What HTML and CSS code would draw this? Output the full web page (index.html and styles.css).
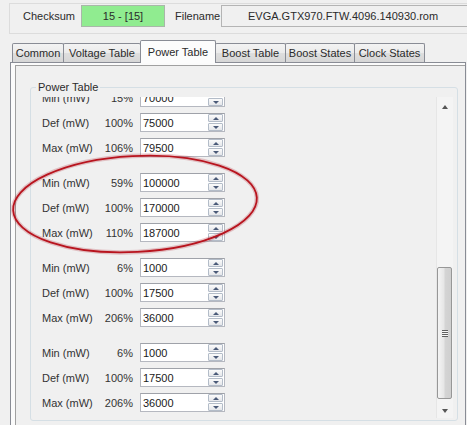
FILE: index.html
```html
<!DOCTYPE html>
<html>
<head>
<meta charset="utf-8">
<link rel="stylesheet" href="styles.css">
</head>
<body>
<div class="top">
  <div class="toprow">
    <span class="lbl lbl-chk">Checksum</span>
    <div class="chk">15 - [15]</div>
    <span class="lbl lbl-fn">Filename</span>
    <div class="fname">EVGA.GTX970.FTW.4096.140930.rom</div>
  </div>
</div>
<div class="tabs">
  <div class="tab w1">Common</div>
  <div class="tab w2">Voltage Table</div>
  <div class="tab sel w3">Power Table</div>
  <div class="tab w4">Boost Table</div>
  <div class="tab w5">Boost States</div>
  <div class="tab w6">Clock States</div>
</div>
<div class="tabpanel">
  <div class="page">
    <div class="group">
      <span class="legend">Power Table</span>
      <div class="scroller">
        <div class="viewport">
          <div class="content">
            <div class="set">
              <div class="row"><span class="name">Min (mW)</span><span class="pct">15%</span><div class="num"><span class="val">70000</span><div class="spin"><i class="up"></i><i class="dn"></i></div></div></div>
              <div class="row"><span class="name">Def (mW)</span><span class="pct">100%</span><div class="num"><span class="val">75000</span><div class="spin"><i class="up"></i><i class="dn"></i></div></div></div>
              <div class="row"><span class="name">Max (mW)</span><span class="pct">106%</span><div class="num"><span class="val">79500</span><div class="spin"><i class="up"></i><i class="dn"></i></div></div></div>
            </div>
            <div class="set">
              <div class="row"><span class="name">Min (mW)</span><span class="pct">59%</span><div class="num"><span class="val">100000</span><div class="spin"><i class="up"></i><i class="dn"></i></div></div></div>
              <div class="row"><span class="name">Def (mW)</span><span class="pct">100%</span><div class="num"><span class="val">170000</span><div class="spin"><i class="up"></i><i class="dn"></i></div></div></div>
              <div class="row"><span class="name">Max (mW)</span><span class="pct">110%</span><div class="num"><span class="val">187000</span><div class="spin"><i class="up"></i><i class="dn"></i></div></div></div>
            </div>
            <div class="set">
              <div class="row"><span class="name">Min (mW)</span><span class="pct">6%</span><div class="num"><span class="val">1000</span><div class="spin"><i class="up"></i><i class="dn"></i></div></div></div>
              <div class="row"><span class="name">Def (mW)</span><span class="pct">100%</span><div class="num"><span class="val">17500</span><div class="spin"><i class="up"></i><i class="dn"></i></div></div></div>
              <div class="row"><span class="name">Max (mW)</span><span class="pct">206%</span><div class="num"><span class="val">36000</span><div class="spin"><i class="up"></i><i class="dn"></i></div></div></div>
            </div>
            <div class="set">
              <div class="row"><span class="name">Min (mW)</span><span class="pct">6%</span><div class="num"><span class="val">1000</span><div class="spin"><i class="up"></i><i class="dn"></i></div></div></div>
              <div class="row"><span class="name">Def (mW)</span><span class="pct">100%</span><div class="num"><span class="val">17500</span><div class="spin"><i class="up"></i><i class="dn"></i></div></div></div>
              <div class="row"><span class="name">Max (mW)</span><span class="pct">206%</span><div class="num"><span class="val">36000</span><div class="spin"><i class="up"></i><i class="dn"></i></div></div></div>
            </div>
          </div>
        </div>
        <div class="vscroll">
          <div class="sbtn"><i class="arr-up"></i></div>
          <div class="track"><div class="thumb"><div class="grip"></div></div></div>
          <div class="sbtn"><i class="arr-dn"></i></div>
        </div>
      </div>
    </div>
  </div>
</div>
<svg class="mark" width="467" height="425" viewBox="0 0 467 425">
  <ellipse cx="135" cy="204" rx="122" ry="48" transform="rotate(-3 135 204)" fill="none" stroke="rgba(170,20,30,0.22)" stroke-width="4.5"/>
  <ellipse cx="135" cy="204" rx="122" ry="48" transform="rotate(-3 135 204)" fill="none" stroke="#b8141e" stroke-width="1.8"/>
</svg>
</body>
</html>
```
FILE: styles.css
```css
html, body {
  margin: 0;
  padding: 0;
}
body {
  width: 467px;
  height: 425px;
  overflow: hidden;
  position: relative;
  background: #f0f0f0;
  font-family: "Liberation Sans", Arial, sans-serif;
  font-size: 11px;
  color: #2b2b2b;
}
.top {
  margin: 3px 0 0 9px;
  height: 31px;
  box-sizing: border-box;
  border: 1px solid #dcdcdc;
  border-right: none;
  padding: 1px 0 0 13px;
  overflow: hidden;
}
.toprow {
  display: flex;
  align-items: center;
  height: 22px;
}
.lbl { flex: none; }
.lbl-chk { width: 58px; }
.chk {
  flex: none;
  width: 84px;
  height: 22px;
  box-sizing: border-box;
  border: 1px solid #a9b7a9;
  background: #90ec90;
  display: flex;
  align-items: center;
  justify-content: center;
}
.lbl-fn { margin-left: 10px; width: 46px; }
.fname {
  width: 270px;
  flex: none;
  height: 22px;
  box-sizing: border-box;
  border: 1px solid #b4b4b4;
  border-right: none;
  display: flex;
  align-items: center;
  padding-left: 26px;
}
.tabs {
  margin: 6px 0 0 12px;
  height: 22px;
  display: flex;
  align-items: flex-end;
  position: relative;
  z-index: 2;
}
.tab {
  flex: none;
  height: 19px;
  box-sizing: border-box;
  border: 1px solid #898c95;
  border-bottom: none;
  margin-right: -1px;
  background: linear-gradient(#f3f3f3, #ebebeb 50%, #dedede 51%, #d6d6d6);
  display: flex;
  align-items: center;
  justify-content: center;
  border-radius: 2px 2px 0 0;
}
.tab.sel {
  height: 23px;
  margin-bottom: -1px;
  background: #fcfcfc;
  position: relative;
  z-index: 3;
  padding-bottom: 1px;
}
.w1 { width: 52px; }
.w2 { width: 78px; }
.w3 { width: 76px; }
.w4 { width: 71px; }
.w5 { width: 70px; }
.w6 { width: 71px; }
.tabpanel {
  margin-left: 10px;
  width: 456px;
  height: 363px;
  box-sizing: border-box;
  border: 1px solid #898c95;
  border-bottom: none;
  background: #fbfbfb;
  padding: 2px 0 0 4px;
}
.page {
  height: 360px;
  border-left: 1px solid #a0a0a0;
  border-top: 1px solid #a0a0a0;
  background: #f0f0f0;
  padding: 21px 0 0 14px;
  box-sizing: border-box;
}
.group {
  position: relative;
  width: 428px;
  height: 334px;
  box-sizing: border-box;
  border: 1px solid #d5dfe5;
  border-radius: 3px;
  padding: 9px 0 0 1px;
}
.legend {
  position: absolute;
  top: -7px;
  left: 5px;
  padding: 0 2px;
  line-height: 13px;
  background: #f0f0f0;
}
.scroller {
  display: flex;
  width: 421px;
  height: 321px;
}
.viewport {
  flex: 1;
  overflow: hidden;
}
.content {
  margin-top: -12px;
  padding-left: 10px;
}
.set { margin-bottom: 10px; }
.row {
  display: flex;
  align-items: center;
  height: 25px;
}
.name { width: 60px; color: #333; }
.pct { width: 31px; text-align: right; color: #333; }
.num {
  margin-left: 7px;
  width: 85px;
  height: 19px;
  box-sizing: border-box;
  border: 1px solid #b5b8c0;
  border-top-color: #9fa2a9;
  background: #fff;
  display: flex;
  align-items: center;
}
.val {
  flex: 1;
  padding-left: 2px;
  color: #1a1a1a;
}
.spin {
  width: 15px;
  height: 17px;
  margin-right: 1px;
  display: flex;
  flex-direction: column;
  justify-content: space-between;
}
.spin i {
  display: block;
  height: 8px;
  box-sizing: border-box;
  border: 1px solid #b3bcc8;
  border-radius: 1px;
  background: linear-gradient(#fbfbfb, #e4e6ea);
  position: relative;
}
.spin i::after {
  content: "";
  position: absolute;
  left: 3.5px;
  top: 1.5px;
  width: 0;
  height: 0;
  border-left: 3px solid transparent;
  border-right: 3px solid transparent;
}
.spin i.up::after { border-bottom: 3px solid #4a5a78; }
.spin i.dn::after { border-top: 3px solid #4a5a78; }
.vscroll {
  width: 17px;
  display: flex;
  flex-direction: column;
  background: #f4f4f4;
  border-left: 1px solid #e6e6e6;
  box-sizing: border-box;
}
.sbtn {
  height: 17px;
  display: flex;
  align-items: center;
  justify-content: center;
}
.arr-up, .arr-dn {
  width: 0;
  height: 0;
  border-left: 3.5px solid transparent;
  border-right: 3.5px solid transparent;
}
.arr-up { border-bottom: 4px solid #555; margin-top: 3px; }
.arr-dn { border-top: 4px solid #555; margin-top: 3px; }
.track {
  flex: 1;
}
.thumb {
  margin: 153px 1px 0 0;
  height: 132px;
  box-sizing: border-box;
  border: 1px solid #979797;
  border-radius: 2px;
  background: linear-gradient(90deg, #f4f4f4, #e6e6e6 45%, #d4d4d4 55%, #cfcfcf);
  display: flex;
  align-items: center;
  justify-content: center;
}
.grip {
  width: 6px;
  height: 7px;
  background: repeating-linear-gradient(#5f5f5f 0 1px, #f6f6f6 1px 2px);
}
.mark {
  position: absolute;
  left: 0;
  top: 0;
  pointer-events: none;
}
```
